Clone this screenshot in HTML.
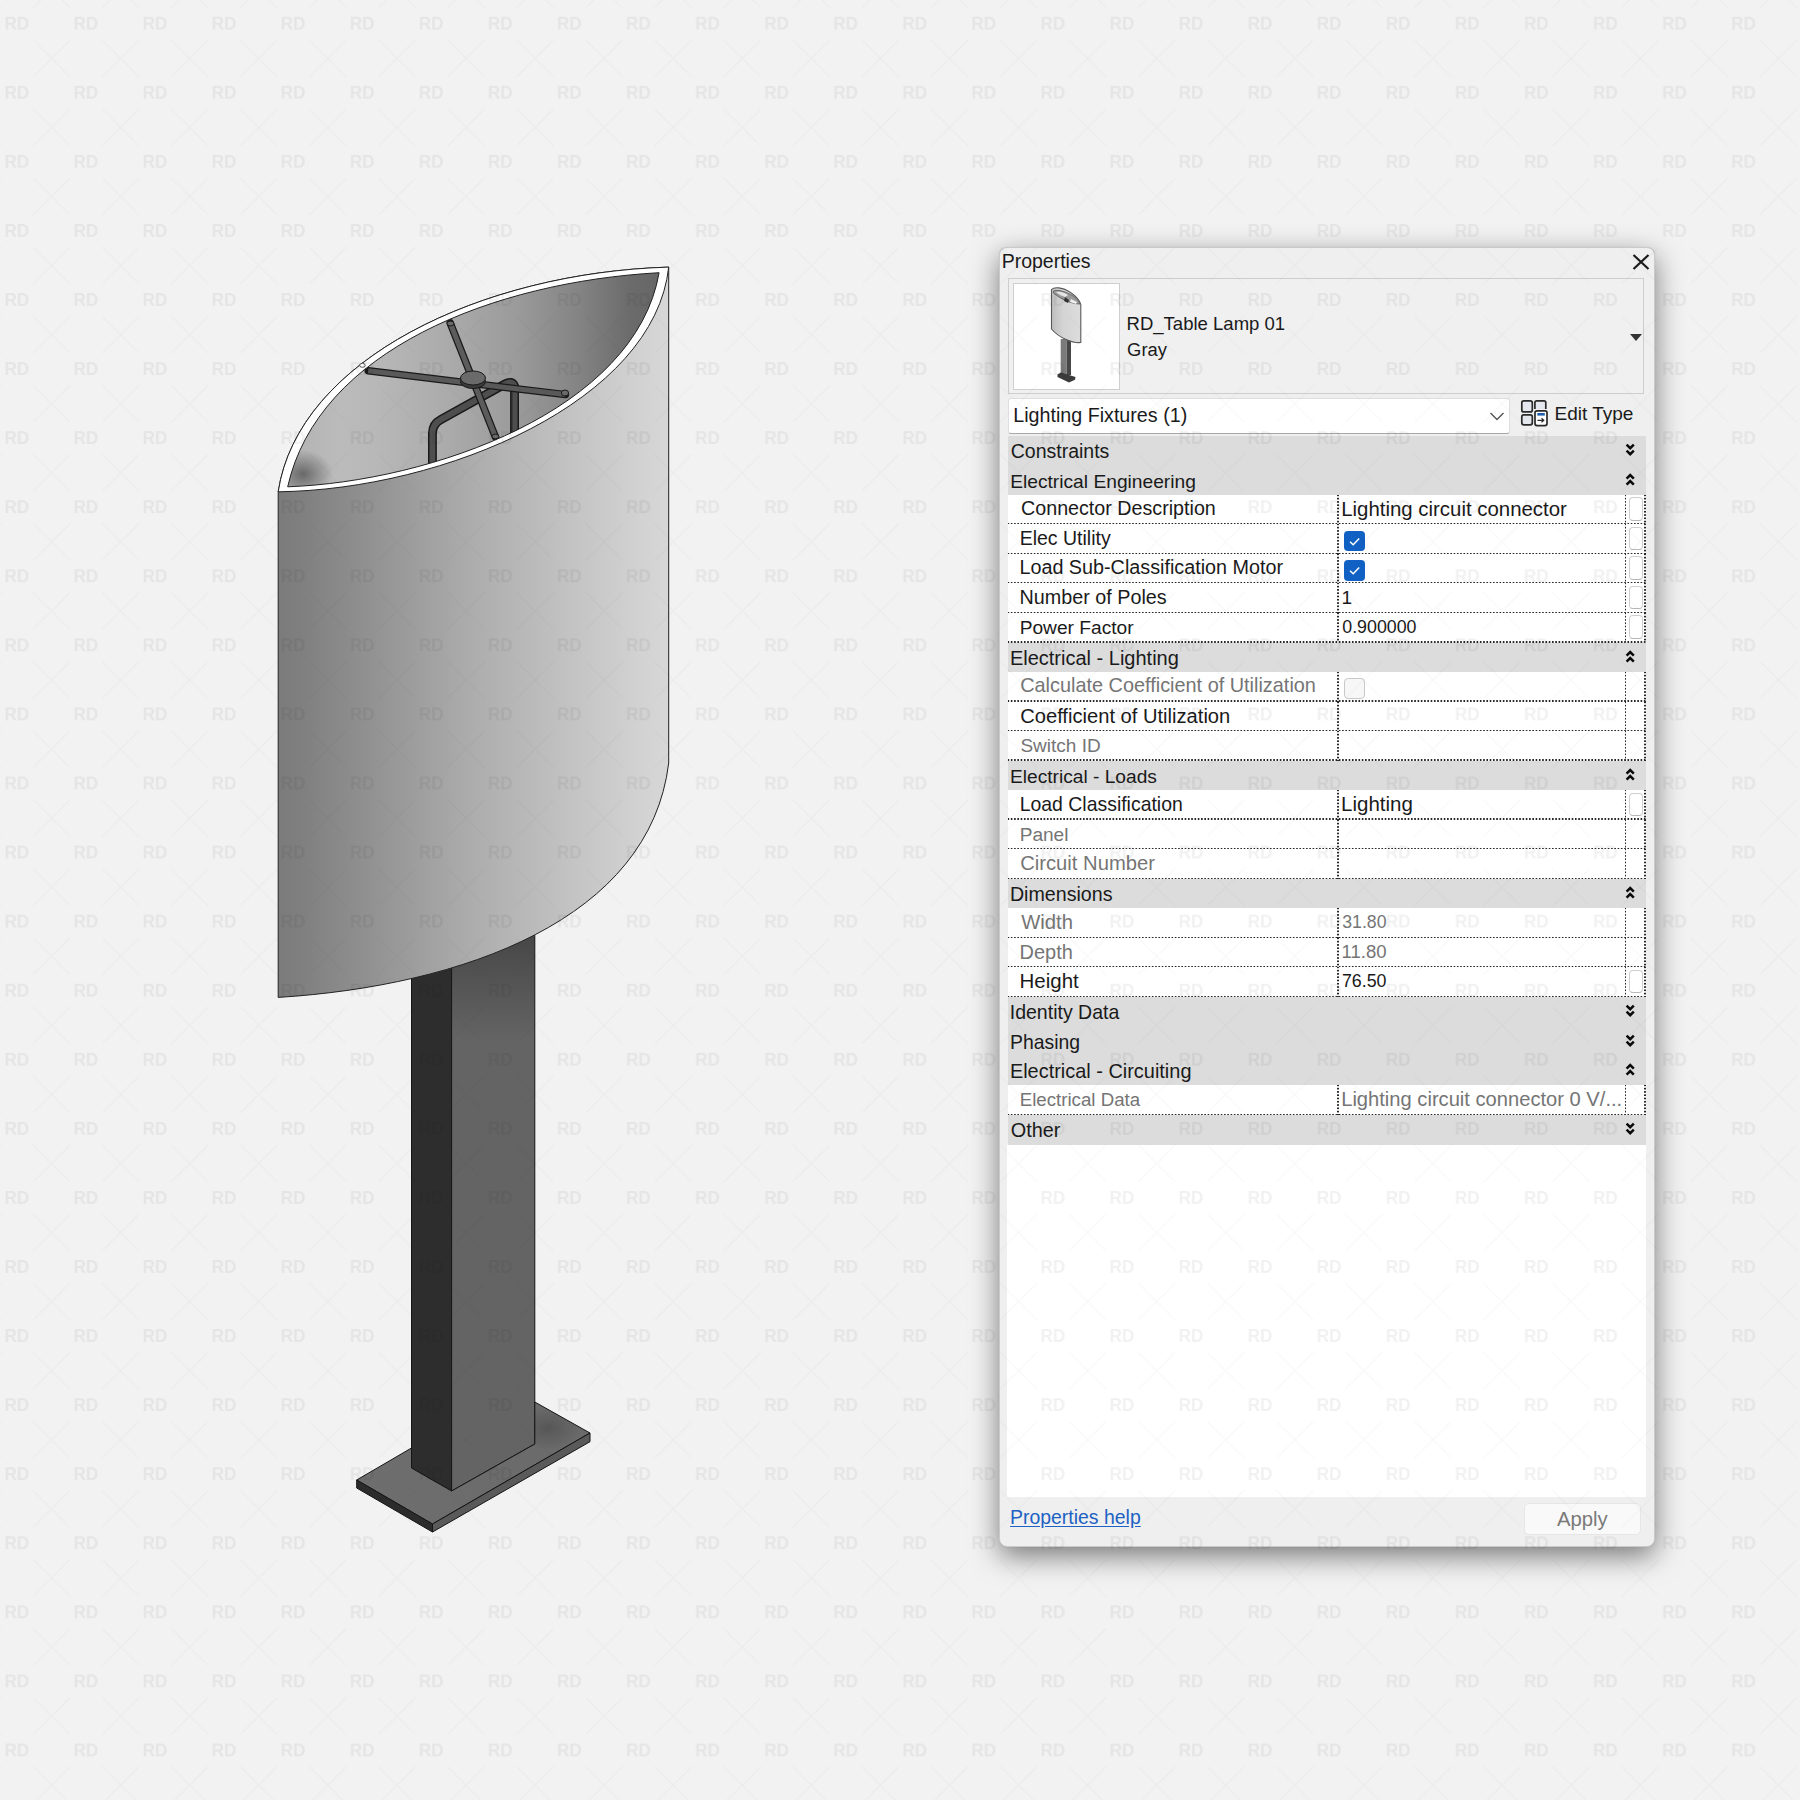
<!DOCTYPE html>
<html><head><meta charset="utf-8"><style>
html,body{margin:0;padding:0;width:1800px;height:1800px;overflow:hidden;background:#f2f2f2;font-family:"Liberation Sans", sans-serif}
.abs{position:absolute}
.t{position:absolute;white-space:nowrap;line-height:1;}
.panel{background:#efefef;border:1px solid #cacaca;box-sizing:border-box;border-radius:8px;box-shadow:0 0 1px rgba(0,0,0,0.15),0 9px 28px rgba(0,0,0,0.5)}
</style></head><body>

<svg class="abs" width="1800" height="1800" viewBox="0 0 1800 1800" style="left:0;top:0">
<defs>
 <linearGradient id="shadeG" x1="278" y1="0" x2="669" y2="0" gradientUnits="userSpaceOnUse">
  <stop offset="0" stop-color="#7b7b7b"/>
  <stop offset="0.056" stop-color="#7f7f7f"/>
  <stop offset="0.25" stop-color="#939393"/>
  <stop offset="0.49" stop-color="#acacac"/>
  <stop offset="0.75" stop-color="#c3c3c3"/>
  <stop offset="0.926" stop-color="#d2d2d2"/>
  <stop offset="1" stop-color="#d7d7d7"/>
 </linearGradient>
 <linearGradient id="shadeV" x1="0" y1="267" x2="0" y2="1000" gradientUnits="userSpaceOnUse">
  <stop offset="0" stop-color="#ffffff" stop-opacity="0.08"/>
  <stop offset="0.5" stop-color="#ffffff" stop-opacity="0"/>
  <stop offset="1" stop-color="#000000" stop-opacity="0.03"/>
 </linearGradient>
 <linearGradient id="inG" x1="288" y1="0" x2="660" y2="0" gradientUnits="userSpaceOnUse">
  <stop offset="0" stop-color="#b2b2b2"/>
  <stop offset="0.14" stop-color="#bbbbbb"/>
  <stop offset="0.25" stop-color="#b7b7b7"/>
  <stop offset="0.44" stop-color="#aaaaaa"/>
  <stop offset="0.62" stop-color="#9a9a9a"/>
  <stop offset="0.78" stop-color="#848484"/>
  <stop offset="0.92" stop-color="#6b6b6b"/>
  <stop offset="1" stop-color="#666666"/>
 </linearGradient>
 <radialGradient id="darkR"><stop offset="0" stop-color="#000" stop-opacity="0.42"/><stop offset="1" stop-color="#000" stop-opacity="0"/></radialGradient>
 <radialGradient id="darkR2"><stop offset="0" stop-color="#000" stop-opacity="0.18"/><stop offset="1" stop-color="#000" stop-opacity="0"/></radialGradient>
 <linearGradient id="postR" x1="0" y1="935" x2="0" y2="1040" gradientUnits="userSpaceOnUse">
  <stop offset="0" stop-color="#474747"/>
  <stop offset="1" stop-color="#646464"/>
 </linearGradient>
 <linearGradient id="baseG" x1="356" y1="1480" x2="590" y2="1433" gradientUnits="userSpaceOnUse">
  <stop offset="0" stop-color="#6e6e6e"/>
  <stop offset="1" stop-color="#6a6a6a"/>
 </linearGradient>
 <clipPath id="inClip"><path d="M287.7,486.8 C317.9,350.4 493.8,281.9 659.1,272.7 C635.3,410.4 430.9,481.5 287.7,486.8 Z"/></clipPath>
</defs>
<!-- post -->
<polygon points="411.5,930 451.6,930 451.6,1491 411.5,1468" fill="#2d2d2d" stroke="#151515" stroke-width="1"/>
<polygon points="451.6,930 534.8,930 534.8,1444 451.6,1491" fill="url(#postR)" stroke="#151515" stroke-width="1"/>
<!-- base -->
<polygon points="356.7,1480 411.5,1448 411.5,1468 451.6,1491 534.8,1444 534.8,1402 590,1433 432.5,1524" fill="url(#baseG)" stroke="#151515" stroke-width="1" stroke-linejoin="round"/>
<clipPath id="baseClip"><polygon points="356.7,1480 411.5,1448 411.5,1468 451.6,1491 534.8,1444 534.8,1402 590,1433 432.5,1524"/></clipPath><ellipse cx="548" cy="1428" rx="34" ry="22" fill="url(#darkR)" opacity="0.45" clip-path="url(#baseClip)"/>
<polygon points="356.7,1480 432.5,1524 432.5,1532 356.7,1488" fill="#2c2c2c" stroke="#151515" stroke-width="1" stroke-linejoin="round"/>
<polygon points="432.5,1524 590,1433 590,1441.7 432.5,1532" fill="#5a5a5a" stroke="#151515" stroke-width="1" stroke-linejoin="round"/>
<!-- shade outer body -->
<path d="M278.2,491.8 C298.2,359.4 481.7,272.7 668.7,267.1 L668.7,763 C649.7,919.7 462,985.9 278.2,997.4 Z" fill="url(#shadeG)" stroke="#222" stroke-width="1"/>
<!-- rim white -->
<path d="M278.2,491.8 C298.2,359.4 481.7,272.7 668.7,267.1 C654.2,401.3 444.4,489.6 278.2,491.8 Z" fill="#ffffff" stroke="#222" stroke-width="1"/>
<!-- interior -->
<path d="M287.7,486.8 C317.9,350.4 493.8,281.9 659.1,272.7 C635.3,410.4 430.9,481.5 287.7,486.8 Z" fill="url(#inG)"/>
<g clip-path="url(#inClip)">
 <ellipse cx="303" cy="474" rx="30" ry="24" fill="url(#darkR)"/>
 
 <!-- bracket -->
 <path d="M432.5,470 L432.5,433 Q432.5,424 441,419.5 L505,384 Q512,380 514.5,386 L514.5,440" fill="none" stroke="#1a1a1a" stroke-width="9" stroke-linejoin="round"/>
 <path d="M432.5,470 L432.5,433 Q432.5,424 441,419.5 L505,384 Q512,380 514.5,386 L514.5,440" fill="none" stroke="#4e4e4e" stroke-width="6" stroke-linejoin="round"/>
 <path d="M436,470 L436,434 M511.5,388 L511.5,440" fill="none" stroke="#2a2a2a" stroke-width="2"/>
 <!-- short arm -->
 <line x1="450.2" y1="323" x2="495.6" y2="437.3" stroke="#1a1a1a" stroke-width="7.5" stroke-linecap="round"/>
 <line x1="450.2" y1="323" x2="495.6" y2="437.3" stroke="#5c5c5c" stroke-width="5"/>
 <!-- long arm -->
 <line x1="368.2" y1="370.8" x2="565.4" y2="394.6" stroke="#1a1a1a" stroke-width="7.5" stroke-linecap="round"/>
 <line x1="368.2" y1="370.8" x2="565.4" y2="394.6" stroke="#595959" stroke-width="5"/>
 <ellipse cx="565" cy="393" rx="3.6" ry="3" fill="#6a6a6a" stroke="#1a1a1a" stroke-width="1"/>
 <ellipse cx="450.5" cy="323.5" rx="3.4" ry="2.4" fill="#6a6a6a" stroke="#1a1a1a" stroke-width="1"/>
 <ellipse cx="495.5" cy="436.5" rx="3.4" ry="2.4" fill="#6a6a6a" stroke="#1a1a1a" stroke-width="1"/>
 <!-- hub -->
 <ellipse cx="473" cy="381.5" rx="12.5" ry="7" fill="#3a3a3a" stroke="#1a1a1a" stroke-width="1"/>
 <ellipse cx="473" cy="378" rx="12.5" ry="7" fill="#6a6a6a" stroke="#1a1a1a" stroke-width="1"/>
</g>
<path d="M287.7,486.8 C317.9,350.4 493.8,281.9 659.1,272.7 C635.3,410.4 430.9,481.5 287.7,486.8 Z" fill="none" stroke="#222" stroke-width="1"/>
<ellipse cx="362.4" cy="365.3" rx="2.8" ry="2" fill="#fff" stroke="#333" stroke-width="0.8"/>
</svg>
<div class="abs panel" style="left:999px;top:246.7px;width:656px;height:1300.8px"></div>
<div class="t" style="left:1001.64px;top:251.88px;font-size:19.52px;color:#1a1a1a;">Properties</div>
<svg class="abs" style="left:1630px;top:252px" width="22" height="20" viewBox="0 0 22 20"><path d="M3.5,3 L18.5,17 M18.5,3 L3.5,17" stroke="#1a1a1a" stroke-width="2.2"/></svg>
<div class="abs" style="left:1008px;top:278px;width:636px;height:116px;border:1px solid #cdcdcd;box-sizing:border-box;background:#f0f0f0"></div>
<div class="abs" style="left:1013px;top:283px;width:107px;height:107px;border:1px solid #cfcfcf;box-sizing:border-box;background:#fff"></div>
<svg class="abs" style="left:1013px;top:283px" width="107" height="107" viewBox="0 0 107 107">
<defs><linearGradient id="tg" x1="38" x2="68" gradientUnits="userSpaceOnUse"><stop offset="0" stop-color="#bdbdbd"/><stop offset="0.4" stop-color="#d4d4d4"/><stop offset="1" stop-color="#dcdcdc"/></linearGradient>
<filter id="tb" x="-10%" y="-10%" width="120%" height="120%"><feGaussianBlur stdDeviation="0.45"/></filter></defs>
<g filter="url(#tb)">
<rect x="47.7" y="56" width="6" height="36" fill="#7a7a7a"/><rect x="53.7" y="56" width="4.3" height="36" fill="#474747"/>
<path d="M44.5,91.5 L48,89.5 L62.5,94 L62,96.8 L56,99.5 L44.5,94 Z" fill="#3a3a3a"/>
<path d="M38.5,6.5 C41,3.5 50,4.5 56,8.5 C61,11.5 66,16 67.8,21.5 L67.8,59.5 C60,60.5 46,55 38.5,46 Z" fill="url(#tg)" stroke="#5a5a5a" stroke-width="1.1"/>
<path d="M40.5,8 C45,6 54,9 61,13.5 C64.5,16 66.5,19 67,21 C59,21 48,16.5 40.5,10 Z" fill="#9a9a9a" stroke="#555" stroke-width="0.8"/>
<path d="M43,9 C47,8 52,10 55,12 L52,14 C48,13 45,11 43,9 Z" fill="#e8e8e8"/>
<path d="M52,14 L56,17 L55,20 L51,18 Z" fill="#333"/>
<path d="M58,16 L64,19 L63,21 L57,19 Z" fill="#eee"/>
</g>
</svg>
<div class="t" style="left:1126.52px;top:315.10px;font-size:18.55px;color:#1a1a1a;">RD_Table Lamp 01</div>
<div class="t" style="left:1127.08px;top:340.91px;font-size:18.42px;color:#1a1a1a;">Gray</div>
<svg class="abs" style="left:1628px;top:332px" width="16" height="11" viewBox="0 0 16 11"><path d="M2,2 L14,2 L8,9 Z" fill="#333"/></svg>
<div class="abs" style="left:1008px;top:397.5px;width:502px;height:36px;border:1px solid #dedede;border-bottom:1px solid #a8a8a8;box-sizing:border-box;background:#fff;border-radius:3px"></div>
<div class="t" style="left:1013.22px;top:405.92px;font-size:19.7px;color:#1a1a1a;">Lighting Fixtures (1)</div>
<svg class="abs" style="left:1488px;top:409px" width="18" height="14" viewBox="0 0 18 14"><path d="M2.5,4 L9,10.5 L15.5,4" fill="none" stroke="#555" stroke-width="1.4"/></svg>
<svg class="abs" style="left:1518px;top:397px" width="32" height="32" viewBox="0 0 32 32">
<rect x="3.8" y="3.9" width="10.5" height="11" rx="2" fill="#e4e8ee" stroke="#2a2a2a" stroke-width="1.7"/>
<rect x="3.8" y="17.8" width="10.5" height="10" rx="2" fill="#e4e8ee" stroke="#2a2a2a" stroke-width="1.7"/>
<path d="M16.9,12 L16.9,5.8 Q16.9,3.9 18.8,3.9 L26,3.9 Q27.8,3.9 27.8,5.8 L27.8,12" fill="#e4e8ee" stroke="#2a2a2a" stroke-width="1.7"/>
<rect x="17" y="13.8" width="12" height="14.8" rx="2" fill="#fff" stroke="#2a2a2a" stroke-width="1.7"/>
<rect x="19.3" y="16" width="7.5" height="2.6" fill="#1f5fb0"/>
<path d="M19.5,23.3 L25.5,23.3 M23.5,21.3 L25.8,23.3 L23.5,25.3" fill="none" stroke="#2a2a2a" stroke-width="1.2"/>
</svg>
<div class="t" style="left:1554.48px;top:403.92px;font-size:19.0px;color:#1a1a1a;">Edit Type</div>
<div class="abs" style="left:1008px;top:435.80px;width:637.70px;height:29.53px;background:#dcdcdc"></div>
<div class="t" style="left:1010.72px;top:442.08px;font-size:19.51px;color:#1a1a1a;">Constraints</div>
<svg class="abs" style="left:1625px;top:443.20px" width="11" height="13" viewBox="0 0 11 13"><path d="M1.6,1.6 L5.2,5.2 L8.8,1.6 M1.6,7.6 L5.2,11.2 L8.8,7.6" fill="none" stroke="#0a0a0a" stroke-width="2.5"/></svg>
<div class="abs" style="left:1008px;top:465.33px;width:637.70px;height:29.53px;background:#dcdcdc"></div>
<div class="t" style="left:1010.16px;top:471.86px;font-size:19.22px;color:#1a1a1a;">Electrical Engineering</div>
<svg class="abs" style="left:1625px;top:472.73px" width="11" height="13" viewBox="0 0 11 13"><path d="M1.6,5.6 L5.2,2 L8.8,5.6 M1.6,11.6 L5.2,8 L8.8,11.6" fill="none" stroke="#0a0a0a" stroke-width="2.5"/></svg>
<div class="abs" style="left:1008px;top:494.86px;width:638.00px;height:29.53px;background:#fff"></div>
<div class="t" style="left:1021.02px;top:499.18px;font-size:19.7px;color:#1a1a1a;">Connector Description</div>
<div class="t" style="left:1341.17px;top:498.58px;font-size:20.41px;color:#1a1a1a;">Lighting circuit connector</div>
<div class="abs" style="left:1008px;top:523.19px;width:638.00px;height:1.7px;background:repeating-linear-gradient(90deg,rgba(40,40,40,1) 0px,rgba(40,40,40,1) 0.7px,rgba(40,40,40,0) 1.64px,rgba(40,40,40,0) 2.34px,rgba(40,40,40,1) 3.28px)"></div>
<div class="abs" style="left:1337.30px;top:494.86px;width:1.7px;height:29.53px;background:repeating-linear-gradient(180deg,rgba(40,40,40,1) 0px,rgba(40,40,40,1) 0.7px,rgba(40,40,40,0) 1.64px,rgba(40,40,40,0) 2.34px,rgba(40,40,40,1) 3.28px)"></div>
<div class="abs" style="left:1624.80px;top:494.86px;width:1.7px;height:29.53px;background:repeating-linear-gradient(180deg,rgba(40,40,40,1) 0px,rgba(40,40,40,1) 0.7px,rgba(40,40,40,0) 1.64px,rgba(40,40,40,0) 2.34px,rgba(40,40,40,1) 3.28px)"></div>
<div class="abs" style="left:1644.30px;top:494.86px;width:1.7px;height:29.53px;background:repeating-linear-gradient(180deg,rgba(40,40,40,1) 0px,rgba(40,40,40,1) 0.7px,rgba(40,40,40,0) 1.64px,rgba(40,40,40,0) 2.34px,rgba(40,40,40,1) 3.28px)"></div>
<div class="abs" style="left:1628.5px;top:497.36px;width:14px;height:23.5px;background:#fff;border:1px solid #cfcfcf;border-bottom-color:#b8b8b8;box-sizing:border-box;border-radius:4px"></div>
<div class="abs" style="left:1008px;top:524.39px;width:638.00px;height:29.53px;background:#fff"></div>
<div class="t" style="left:1019.64px;top:528.87px;font-size:19.51px;color:#1a1a1a;">Elec Utility</div>
<div class="abs" style="left:1343.8px;top:530.69px;width:21px;height:20.5px;background:#1160c4;border-radius:4px"></div>
<svg class="abs" style="left:1343.8px;top:530.69px" width="21" height="21" viewBox="0 0 21 21"><path d="M6,10.8 L9.2,13.8 L15.2,7.6" fill="none" stroke="#fff" stroke-width="1.5"/></svg>
<div class="abs" style="left:1008px;top:552.72px;width:638.00px;height:1.7px;background:repeating-linear-gradient(90deg,rgba(40,40,40,1) 0px,rgba(40,40,40,1) 0.7px,rgba(40,40,40,0) 1.64px,rgba(40,40,40,0) 2.34px,rgba(40,40,40,1) 3.28px)"></div>
<div class="abs" style="left:1337.30px;top:524.39px;width:1.7px;height:29.53px;background:repeating-linear-gradient(180deg,rgba(40,40,40,1) 0px,rgba(40,40,40,1) 0.7px,rgba(40,40,40,0) 1.64px,rgba(40,40,40,0) 2.34px,rgba(40,40,40,1) 3.28px)"></div>
<div class="abs" style="left:1624.80px;top:524.39px;width:1.7px;height:29.53px;background:repeating-linear-gradient(180deg,rgba(40,40,40,1) 0px,rgba(40,40,40,1) 0.7px,rgba(40,40,40,0) 1.64px,rgba(40,40,40,0) 2.34px,rgba(40,40,40,1) 3.28px)"></div>
<div class="abs" style="left:1644.30px;top:524.39px;width:1.7px;height:29.53px;background:repeating-linear-gradient(180deg,rgba(40,40,40,1) 0px,rgba(40,40,40,1) 0.7px,rgba(40,40,40,0) 1.64px,rgba(40,40,40,0) 2.34px,rgba(40,40,40,1) 3.28px)"></div>
<div class="abs" style="left:1628.5px;top:526.89px;width:14px;height:23.5px;background:#fff;border:1px solid #cfcfcf;border-bottom-color:#b8b8b8;box-sizing:border-box;border-radius:4px"></div>
<div class="abs" style="left:1008px;top:553.92px;width:638.00px;height:29.53px;background:#fff"></div>
<div class="t" style="left:1019.42px;top:558.18px;font-size:19.78px;color:#1a1a1a;">Load Sub-Classification Motor</div>
<div class="abs" style="left:1343.8px;top:560.22px;width:21px;height:20.5px;background:#1160c4;border-radius:4px"></div>
<svg class="abs" style="left:1343.8px;top:560.22px" width="21" height="21" viewBox="0 0 21 21"><path d="M6,10.8 L9.2,13.8 L15.2,7.6" fill="none" stroke="#fff" stroke-width="1.5"/></svg>
<div class="abs" style="left:1008px;top:582.25px;width:638.00px;height:1.7px;background:repeating-linear-gradient(90deg,rgba(40,40,40,1) 0px,rgba(40,40,40,1) 0.7px,rgba(40,40,40,0) 1.64px,rgba(40,40,40,0) 2.34px,rgba(40,40,40,1) 3.28px)"></div>
<div class="abs" style="left:1337.30px;top:553.92px;width:1.7px;height:29.53px;background:repeating-linear-gradient(180deg,rgba(40,40,40,1) 0px,rgba(40,40,40,1) 0.7px,rgba(40,40,40,0) 1.64px,rgba(40,40,40,0) 2.34px,rgba(40,40,40,1) 3.28px)"></div>
<div class="abs" style="left:1624.80px;top:553.92px;width:1.7px;height:29.53px;background:repeating-linear-gradient(180deg,rgba(40,40,40,1) 0px,rgba(40,40,40,1) 0.7px,rgba(40,40,40,0) 1.64px,rgba(40,40,40,0) 2.34px,rgba(40,40,40,1) 3.28px)"></div>
<div class="abs" style="left:1644.30px;top:553.92px;width:1.7px;height:29.53px;background:repeating-linear-gradient(180deg,rgba(40,40,40,1) 0px,rgba(40,40,40,1) 0.7px,rgba(40,40,40,0) 1.64px,rgba(40,40,40,0) 2.34px,rgba(40,40,40,1) 3.28px)"></div>
<div class="abs" style="left:1628.5px;top:556.42px;width:14px;height:23.5px;background:#fff;border:1px solid #cfcfcf;border-bottom-color:#b8b8b8;box-sizing:border-box;border-radius:4px"></div>
<div class="abs" style="left:1008px;top:583.45px;width:638.00px;height:29.53px;background:#fff"></div>
<div class="t" style="left:1019.62px;top:587.73px;font-size:19.75px;color:#1a1a1a;">Number of Poles</div>
<div class="t" style="left:1341.62px;top:588.37px;font-size:19.0px;color:#1a1a1a;">1</div>
<div class="abs" style="left:1008px;top:611.78px;width:638.00px;height:1.7px;background:repeating-linear-gradient(90deg,rgba(40,40,40,1) 0px,rgba(40,40,40,1) 0.7px,rgba(40,40,40,0) 1.64px,rgba(40,40,40,0) 2.34px,rgba(40,40,40,1) 3.28px)"></div>
<div class="abs" style="left:1337.30px;top:583.45px;width:1.7px;height:29.53px;background:repeating-linear-gradient(180deg,rgba(40,40,40,1) 0px,rgba(40,40,40,1) 0.7px,rgba(40,40,40,0) 1.64px,rgba(40,40,40,0) 2.34px,rgba(40,40,40,1) 3.28px)"></div>
<div class="abs" style="left:1624.80px;top:583.45px;width:1.7px;height:29.53px;background:repeating-linear-gradient(180deg,rgba(40,40,40,1) 0px,rgba(40,40,40,1) 0.7px,rgba(40,40,40,0) 1.64px,rgba(40,40,40,0) 2.34px,rgba(40,40,40,1) 3.28px)"></div>
<div class="abs" style="left:1644.30px;top:583.45px;width:1.7px;height:29.53px;background:repeating-linear-gradient(180deg,rgba(40,40,40,1) 0px,rgba(40,40,40,1) 0.7px,rgba(40,40,40,0) 1.64px,rgba(40,40,40,0) 2.34px,rgba(40,40,40,1) 3.28px)"></div>
<div class="abs" style="left:1628.5px;top:585.95px;width:14px;height:23.5px;background:#fff;border:1px solid #cfcfcf;border-bottom-color:#b8b8b8;box-sizing:border-box;border-radius:4px"></div>
<div class="abs" style="left:1008px;top:612.98px;width:638.00px;height:29.53px;background:#fff"></div>
<div class="t" style="left:1019.67px;top:617.75px;font-size:19.17px;color:#1a1a1a;">Power Factor</div>
<div class="t" style="left:1342.27px;top:618.90px;font-size:17.81px;color:#1a1a1a;">0.900000</div>
<div class="abs" style="left:1008px;top:641.31px;width:638.00px;height:1.7px;background:repeating-linear-gradient(90deg,rgba(40,40,40,1) 0px,rgba(40,40,40,1) 0.7px,rgba(40,40,40,0) 1.64px,rgba(40,40,40,0) 2.34px,rgba(40,40,40,1) 3.28px)"></div>
<div class="abs" style="left:1337.30px;top:612.98px;width:1.7px;height:29.53px;background:repeating-linear-gradient(180deg,rgba(40,40,40,1) 0px,rgba(40,40,40,1) 0.7px,rgba(40,40,40,0) 1.64px,rgba(40,40,40,0) 2.34px,rgba(40,40,40,1) 3.28px)"></div>
<div class="abs" style="left:1624.80px;top:612.98px;width:1.7px;height:29.53px;background:repeating-linear-gradient(180deg,rgba(40,40,40,1) 0px,rgba(40,40,40,1) 0.7px,rgba(40,40,40,0) 1.64px,rgba(40,40,40,0) 2.34px,rgba(40,40,40,1) 3.28px)"></div>
<div class="abs" style="left:1644.30px;top:612.98px;width:1.7px;height:29.53px;background:repeating-linear-gradient(180deg,rgba(40,40,40,1) 0px,rgba(40,40,40,1) 0.7px,rgba(40,40,40,0) 1.64px,rgba(40,40,40,0) 2.34px,rgba(40,40,40,1) 3.28px)"></div>
<div class="abs" style="left:1628.5px;top:615.48px;width:14px;height:23.5px;background:#fff;border:1px solid #cfcfcf;border-bottom-color:#b8b8b8;box-sizing:border-box;border-radius:4px"></div>
<div class="abs" style="left:1008px;top:642.51px;width:637.70px;height:29.53px;background:#dcdcdc"></div>
<div class="t" style="left:1009.90px;top:648.37px;font-size:20.01px;color:#1a1a1a;">Electrical - Lighting</div>
<svg class="abs" style="left:1625px;top:649.91px" width="11" height="13" viewBox="0 0 11 13"><path d="M1.6,5.6 L5.2,2 L8.8,5.6 M1.6,11.6 L5.2,8 L8.8,11.6" fill="none" stroke="#0a0a0a" stroke-width="2.5"/></svg>
<div class="abs" style="left:1008px;top:672.04px;width:638.00px;height:29.53px;background:#fff"></div>
<div class="t" style="left:1020.21px;top:676.20px;font-size:19.89px;color:#757575;">Calculate Coefficient of Utilization</div>
<div class="abs" style="left:1343.8px;top:678.34px;width:21px;height:20.5px;background:#f7f7f7;border:1px solid #c9c9c9;box-sizing:border-box;border-radius:4px"></div>
<div class="abs" style="left:1008px;top:700.37px;width:638.00px;height:1.7px;background:repeating-linear-gradient(90deg,rgba(40,40,40,1) 0px,rgba(40,40,40,1) 0.7px,rgba(40,40,40,0) 1.64px,rgba(40,40,40,0) 2.34px,rgba(40,40,40,1) 3.28px)"></div>
<div class="abs" style="left:1337.30px;top:672.04px;width:1.7px;height:29.53px;background:repeating-linear-gradient(180deg,rgba(40,40,40,1) 0px,rgba(40,40,40,1) 0.7px,rgba(40,40,40,0) 1.64px,rgba(40,40,40,0) 2.34px,rgba(40,40,40,1) 3.28px)"></div>
<div class="abs" style="left:1624.80px;top:672.04px;width:1.7px;height:29.53px;background:repeating-linear-gradient(180deg,rgba(40,40,40,1) 0px,rgba(40,40,40,1) 0.7px,rgba(40,40,40,0) 1.64px,rgba(40,40,40,0) 2.34px,rgba(40,40,40,1) 3.28px)"></div>
<div class="abs" style="left:1644.30px;top:672.04px;width:1.7px;height:29.53px;background:repeating-linear-gradient(180deg,rgba(40,40,40,1) 0px,rgba(40,40,40,1) 0.7px,rgba(40,40,40,0) 1.64px,rgba(40,40,40,0) 2.34px,rgba(40,40,40,1) 3.28px)"></div>
<div class="abs" style="left:1008px;top:701.57px;width:638.00px;height:29.53px;background:#fff"></div>
<div class="t" style="left:1020.19px;top:705.51px;font-size:20.15px;color:#1a1a1a;">Coefficient of Utilization</div>
<div class="abs" style="left:1008px;top:729.90px;width:638.00px;height:1.7px;background:repeating-linear-gradient(90deg,rgba(40,40,40,1) 0px,rgba(40,40,40,1) 0.7px,rgba(40,40,40,0) 1.64px,rgba(40,40,40,0) 2.34px,rgba(40,40,40,1) 3.28px)"></div>
<div class="abs" style="left:1337.30px;top:701.57px;width:1.7px;height:29.53px;background:repeating-linear-gradient(180deg,rgba(40,40,40,1) 0px,rgba(40,40,40,1) 0.7px,rgba(40,40,40,0) 1.64px,rgba(40,40,40,0) 2.34px,rgba(40,40,40,1) 3.28px)"></div>
<div class="abs" style="left:1624.80px;top:701.57px;width:1.7px;height:29.53px;background:repeating-linear-gradient(180deg,rgba(40,40,40,1) 0px,rgba(40,40,40,1) 0.7px,rgba(40,40,40,0) 1.64px,rgba(40,40,40,0) 2.34px,rgba(40,40,40,1) 3.28px)"></div>
<div class="abs" style="left:1644.30px;top:701.57px;width:1.7px;height:29.53px;background:repeating-linear-gradient(180deg,rgba(40,40,40,1) 0px,rgba(40,40,40,1) 0.7px,rgba(40,40,40,0) 1.64px,rgba(40,40,40,0) 2.34px,rgba(40,40,40,1) 3.28px)"></div>
<div class="abs" style="left:1008px;top:731.10px;width:638.00px;height:29.53px;background:#fff"></div>
<div class="t" style="left:1020.44px;top:735.99px;font-size:19.03px;color:#757575;">Switch ID</div>
<div class="abs" style="left:1008px;top:759.43px;width:638.00px;height:1.7px;background:repeating-linear-gradient(90deg,rgba(40,40,40,1) 0px,rgba(40,40,40,1) 0.7px,rgba(40,40,40,0) 1.64px,rgba(40,40,40,0) 2.34px,rgba(40,40,40,1) 3.28px)"></div>
<div class="abs" style="left:1337.30px;top:731.10px;width:1.7px;height:29.53px;background:repeating-linear-gradient(180deg,rgba(40,40,40,1) 0px,rgba(40,40,40,1) 0.7px,rgba(40,40,40,0) 1.64px,rgba(40,40,40,0) 2.34px,rgba(40,40,40,1) 3.28px)"></div>
<div class="abs" style="left:1624.80px;top:731.10px;width:1.7px;height:29.53px;background:repeating-linear-gradient(180deg,rgba(40,40,40,1) 0px,rgba(40,40,40,1) 0.7px,rgba(40,40,40,0) 1.64px,rgba(40,40,40,0) 2.34px,rgba(40,40,40,1) 3.28px)"></div>
<div class="abs" style="left:1644.30px;top:731.10px;width:1.7px;height:29.53px;background:repeating-linear-gradient(180deg,rgba(40,40,40,1) 0px,rgba(40,40,40,1) 0.7px,rgba(40,40,40,0) 1.64px,rgba(40,40,40,0) 2.34px,rgba(40,40,40,1) 3.28px)"></div>
<div class="abs" style="left:1008px;top:760.63px;width:637.70px;height:29.53px;background:#dcdcdc"></div>
<div class="t" style="left:1009.97px;top:767.20px;font-size:19.17px;color:#1a1a1a;">Electrical - Loads</div>
<svg class="abs" style="left:1625px;top:768.03px" width="11" height="13" viewBox="0 0 11 13"><path d="M1.6,5.6 L5.2,2 L8.8,5.6 M1.6,11.6 L5.2,8 L8.8,11.6" fill="none" stroke="#0a0a0a" stroke-width="2.5"/></svg>
<div class="abs" style="left:1008px;top:790.16px;width:638.00px;height:29.53px;background:#fff"></div>
<div class="t" style="left:1019.65px;top:794.70px;font-size:19.44px;color:#1a1a1a;">Load Classification</div>
<div class="t" style="left:1341.12px;top:793.81px;font-size:20.5px;color:#1a1a1a;">Lighting</div>
<div class="abs" style="left:1008px;top:818.49px;width:638.00px;height:1.7px;background:repeating-linear-gradient(90deg,rgba(40,40,40,1) 0px,rgba(40,40,40,1) 0.7px,rgba(40,40,40,0) 1.64px,rgba(40,40,40,0) 2.34px,rgba(40,40,40,1) 3.28px)"></div>
<div class="abs" style="left:1337.30px;top:790.16px;width:1.7px;height:29.53px;background:repeating-linear-gradient(180deg,rgba(40,40,40,1) 0px,rgba(40,40,40,1) 0.7px,rgba(40,40,40,0) 1.64px,rgba(40,40,40,0) 2.34px,rgba(40,40,40,1) 3.28px)"></div>
<div class="abs" style="left:1624.80px;top:790.16px;width:1.7px;height:29.53px;background:repeating-linear-gradient(180deg,rgba(40,40,40,1) 0px,rgba(40,40,40,1) 0.7px,rgba(40,40,40,0) 1.64px,rgba(40,40,40,0) 2.34px,rgba(40,40,40,1) 3.28px)"></div>
<div class="abs" style="left:1644.30px;top:790.16px;width:1.7px;height:29.53px;background:repeating-linear-gradient(180deg,rgba(40,40,40,1) 0px,rgba(40,40,40,1) 0.7px,rgba(40,40,40,0) 1.64px,rgba(40,40,40,0) 2.34px,rgba(40,40,40,1) 3.28px)"></div>
<div class="abs" style="left:1628.5px;top:792.66px;width:14px;height:23.5px;background:#fff;border:1px solid #cfcfcf;border-bottom-color:#b8b8b8;box-sizing:border-box;border-radius:4px"></div>
<div class="abs" style="left:1008px;top:819.69px;width:638.00px;height:29.53px;background:#fff"></div>
<div class="t" style="left:1019.67px;top:824.53px;font-size:19.09px;color:#757575;">Panel</div>
<div class="abs" style="left:1008px;top:848.02px;width:638.00px;height:1.7px;background:repeating-linear-gradient(90deg,rgba(40,40,40,1) 0px,rgba(40,40,40,1) 0.7px,rgba(40,40,40,0) 1.64px,rgba(40,40,40,0) 2.34px,rgba(40,40,40,1) 3.28px)"></div>
<div class="abs" style="left:1337.30px;top:819.69px;width:1.7px;height:29.53px;background:repeating-linear-gradient(180deg,rgba(40,40,40,1) 0px,rgba(40,40,40,1) 0.7px,rgba(40,40,40,0) 1.64px,rgba(40,40,40,0) 2.34px,rgba(40,40,40,1) 3.28px)"></div>
<div class="abs" style="left:1624.80px;top:819.69px;width:1.7px;height:29.53px;background:repeating-linear-gradient(180deg,rgba(40,40,40,1) 0px,rgba(40,40,40,1) 0.7px,rgba(40,40,40,0) 1.64px,rgba(40,40,40,0) 2.34px,rgba(40,40,40,1) 3.28px)"></div>
<div class="abs" style="left:1644.30px;top:819.69px;width:1.7px;height:29.53px;background:repeating-linear-gradient(180deg,rgba(40,40,40,1) 0px,rgba(40,40,40,1) 0.7px,rgba(40,40,40,0) 1.64px,rgba(40,40,40,0) 2.34px,rgba(40,40,40,1) 3.28px)"></div>
<div class="abs" style="left:1008px;top:849.22px;width:638.00px;height:29.53px;background:#fff"></div>
<div class="t" style="left:1020.19px;top:853.10px;font-size:20.23px;color:#757575;">Circuit Number</div>
<div class="abs" style="left:1008px;top:877.55px;width:638.00px;height:1.7px;background:repeating-linear-gradient(90deg,rgba(40,40,40,1) 0px,rgba(40,40,40,1) 0.7px,rgba(40,40,40,0) 1.64px,rgba(40,40,40,0) 2.34px,rgba(40,40,40,1) 3.28px)"></div>
<div class="abs" style="left:1337.30px;top:849.22px;width:1.7px;height:29.53px;background:repeating-linear-gradient(180deg,rgba(40,40,40,1) 0px,rgba(40,40,40,1) 0.7px,rgba(40,40,40,0) 1.64px,rgba(40,40,40,0) 2.34px,rgba(40,40,40,1) 3.28px)"></div>
<div class="abs" style="left:1624.80px;top:849.22px;width:1.7px;height:29.53px;background:repeating-linear-gradient(180deg,rgba(40,40,40,1) 0px,rgba(40,40,40,1) 0.7px,rgba(40,40,40,0) 1.64px,rgba(40,40,40,0) 2.34px,rgba(40,40,40,1) 3.28px)"></div>
<div class="abs" style="left:1644.30px;top:849.22px;width:1.7px;height:29.53px;background:repeating-linear-gradient(180deg,rgba(40,40,40,1) 0px,rgba(40,40,40,1) 0.7px,rgba(40,40,40,0) 1.64px,rgba(40,40,40,0) 2.34px,rgba(40,40,40,1) 3.28px)"></div>
<div class="abs" style="left:1008px;top:878.75px;width:637.70px;height:29.53px;background:#dcdcdc"></div>
<div class="t" style="left:1009.93px;top:884.92px;font-size:19.65px;color:#1a1a1a;">Dimensions</div>
<svg class="abs" style="left:1625px;top:886.15px" width="11" height="13" viewBox="0 0 11 13"><path d="M1.6,5.6 L5.2,2 L8.8,5.6 M1.6,11.6 L5.2,8 L8.8,11.6" fill="none" stroke="#0a0a0a" stroke-width="2.5"/></svg>
<div class="abs" style="left:1008px;top:908.28px;width:638.00px;height:29.53px;background:#fff"></div>
<div class="t" style="left:1021.20px;top:912.15px;font-size:20.24px;color:#757575;">Width</div>
<div class="t" style="left:1342.27px;top:914.31px;font-size:17.69px;color:#757575;">31.80</div>
<div class="abs" style="left:1008px;top:936.61px;width:638.00px;height:1.7px;background:repeating-linear-gradient(90deg,rgba(40,40,40,1) 0px,rgba(40,40,40,1) 0.7px,rgba(40,40,40,0) 1.64px,rgba(40,40,40,0) 2.34px,rgba(40,40,40,1) 3.28px)"></div>
<div class="abs" style="left:1337.30px;top:908.28px;width:1.7px;height:29.53px;background:repeating-linear-gradient(180deg,rgba(40,40,40,1) 0px,rgba(40,40,40,1) 0.7px,rgba(40,40,40,0) 1.64px,rgba(40,40,40,0) 2.34px,rgba(40,40,40,1) 3.28px)"></div>
<div class="abs" style="left:1624.80px;top:908.28px;width:1.7px;height:29.53px;background:repeating-linear-gradient(180deg,rgba(40,40,40,1) 0px,rgba(40,40,40,1) 0.7px,rgba(40,40,40,0) 1.64px,rgba(40,40,40,0) 2.34px,rgba(40,40,40,1) 3.28px)"></div>
<div class="abs" style="left:1644.30px;top:908.28px;width:1.7px;height:29.53px;background:repeating-linear-gradient(180deg,rgba(40,40,40,1) 0px,rgba(40,40,40,1) 0.7px,rgba(40,40,40,0) 1.64px,rgba(40,40,40,0) 2.34px,rgba(40,40,40,1) 3.28px)"></div>
<div class="abs" style="left:1008px;top:937.81px;width:638.00px;height:29.53px;background:#fff"></div>
<div class="t" style="left:1019.60px;top:941.90px;font-size:19.98px;color:#757575;">Depth</div>
<div class="t" style="left:1341.50px;top:943.10px;font-size:18.56px;color:#757575;">11.80</div>
<div class="abs" style="left:1008px;top:966.14px;width:638.00px;height:1.7px;background:repeating-linear-gradient(90deg,rgba(40,40,40,1) 0px,rgba(40,40,40,1) 0.7px,rgba(40,40,40,0) 1.64px,rgba(40,40,40,0) 2.34px,rgba(40,40,40,1) 3.28px)"></div>
<div class="abs" style="left:1337.30px;top:937.81px;width:1.7px;height:29.53px;background:repeating-linear-gradient(180deg,rgba(40,40,40,1) 0px,rgba(40,40,40,1) 0.7px,rgba(40,40,40,0) 1.64px,rgba(40,40,40,0) 2.34px,rgba(40,40,40,1) 3.28px)"></div>
<div class="abs" style="left:1624.80px;top:937.81px;width:1.7px;height:29.53px;background:repeating-linear-gradient(180deg,rgba(40,40,40,1) 0px,rgba(40,40,40,1) 0.7px,rgba(40,40,40,0) 1.64px,rgba(40,40,40,0) 2.34px,rgba(40,40,40,1) 3.28px)"></div>
<div class="abs" style="left:1644.30px;top:937.81px;width:1.7px;height:29.53px;background:repeating-linear-gradient(180deg,rgba(40,40,40,1) 0px,rgba(40,40,40,1) 0.7px,rgba(40,40,40,0) 1.64px,rgba(40,40,40,0) 2.34px,rgba(40,40,40,1) 3.28px)"></div>
<div class="abs" style="left:1008px;top:967.34px;width:638.00px;height:29.53px;background:#fff"></div>
<div class="t" style="left:1019.56px;top:970.99px;font-size:20.5px;color:#1a1a1a;">Height</div>
<div class="t" style="left:1341.91px;top:973.24px;font-size:17.84px;color:#1a1a1a;">76.50</div>
<div class="abs" style="left:1008px;top:995.67px;width:638.00px;height:1.7px;background:repeating-linear-gradient(90deg,rgba(40,40,40,1) 0px,rgba(40,40,40,1) 0.7px,rgba(40,40,40,0) 1.64px,rgba(40,40,40,0) 2.34px,rgba(40,40,40,1) 3.28px)"></div>
<div class="abs" style="left:1337.30px;top:967.34px;width:1.7px;height:29.53px;background:repeating-linear-gradient(180deg,rgba(40,40,40,1) 0px,rgba(40,40,40,1) 0.7px,rgba(40,40,40,0) 1.64px,rgba(40,40,40,0) 2.34px,rgba(40,40,40,1) 3.28px)"></div>
<div class="abs" style="left:1624.80px;top:967.34px;width:1.7px;height:29.53px;background:repeating-linear-gradient(180deg,rgba(40,40,40,1) 0px,rgba(40,40,40,1) 0.7px,rgba(40,40,40,0) 1.64px,rgba(40,40,40,0) 2.34px,rgba(40,40,40,1) 3.28px)"></div>
<div class="abs" style="left:1644.30px;top:967.34px;width:1.7px;height:29.53px;background:repeating-linear-gradient(180deg,rgba(40,40,40,1) 0px,rgba(40,40,40,1) 0.7px,rgba(40,40,40,0) 1.64px,rgba(40,40,40,0) 2.34px,rgba(40,40,40,1) 3.28px)"></div>
<div class="abs" style="left:1628.5px;top:969.84px;width:14px;height:23.5px;background:#fff;border:1px solid #cfcfcf;border-bottom-color:#b8b8b8;box-sizing:border-box;border-radius:4px"></div>
<div class="abs" style="left:1008px;top:996.87px;width:637.70px;height:29.53px;background:#dcdcdc"></div>
<div class="t" style="left:1009.74px;top:1003.15px;font-size:19.52px;color:#1a1a1a;">Identity Data</div>
<svg class="abs" style="left:1625px;top:1004.27px" width="11" height="13" viewBox="0 0 11 13"><path d="M1.6,1.6 L5.2,5.2 L8.8,1.6 M1.6,7.6 L5.2,11.2 L8.8,7.6" fill="none" stroke="#0a0a0a" stroke-width="2.5"/></svg>
<div class="abs" style="left:1008px;top:1026.40px;width:637.70px;height:29.53px;background:#dcdcdc"></div>
<div class="t" style="left:1009.95px;top:1032.77px;font-size:19.41px;color:#1a1a1a;">Phasing</div>
<svg class="abs" style="left:1625px;top:1033.80px" width="11" height="13" viewBox="0 0 11 13"><path d="M1.6,1.6 L5.2,5.2 L8.8,1.6 M1.6,7.6 L5.2,11.2 L8.8,7.6" fill="none" stroke="#0a0a0a" stroke-width="2.5"/></svg>
<div class="abs" style="left:1008px;top:1055.93px;width:637.70px;height:29.53px;background:#dcdcdc"></div>
<div class="t" style="left:1009.91px;top:1061.86px;font-size:19.93px;color:#1a1a1a;">Electrical - Circuiting</div>
<svg class="abs" style="left:1625px;top:1063.33px" width="11" height="13" viewBox="0 0 11 13"><path d="M1.6,5.6 L5.2,2 L8.8,5.6 M1.6,11.6 L5.2,8 L8.8,11.6" fill="none" stroke="#0a0a0a" stroke-width="2.5"/></svg>
<div class="abs" style="left:1008px;top:1085.46px;width:638.00px;height:29.53px;background:#fff"></div>
<div class="t" style="left:1019.70px;top:1090.62px;font-size:18.71px;color:#757575;">Electrical Data</div>
<div class="t" style="left:1341.19px;top:1089.40px;font-size:20.15px;color:#757575;">Lighting circuit connector 0 V/...</div>
<div class="abs" style="left:1008px;top:1113.79px;width:638.00px;height:1.7px;background:repeating-linear-gradient(90deg,rgba(40,40,40,1) 0px,rgba(40,40,40,1) 0.7px,rgba(40,40,40,0) 1.64px,rgba(40,40,40,0) 2.34px,rgba(40,40,40,1) 3.28px)"></div>
<div class="abs" style="left:1337.30px;top:1085.46px;width:1.7px;height:29.53px;background:repeating-linear-gradient(180deg,rgba(40,40,40,1) 0px,rgba(40,40,40,1) 0.7px,rgba(40,40,40,0) 1.64px,rgba(40,40,40,0) 2.34px,rgba(40,40,40,1) 3.28px)"></div>
<div class="abs" style="left:1624.80px;top:1085.46px;width:1.7px;height:29.53px;background:repeating-linear-gradient(180deg,rgba(40,40,40,1) 0px,rgba(40,40,40,1) 0.7px,rgba(40,40,40,0) 1.64px,rgba(40,40,40,0) 2.34px,rgba(40,40,40,1) 3.28px)"></div>
<div class="abs" style="left:1644.30px;top:1085.46px;width:1.7px;height:29.53px;background:repeating-linear-gradient(180deg,rgba(40,40,40,1) 0px,rgba(40,40,40,1) 0.7px,rgba(40,40,40,0) 1.64px,rgba(40,40,40,0) 2.34px,rgba(40,40,40,1) 3.28px)"></div>
<div class="abs" style="left:1008px;top:1114.99px;width:637.70px;height:29.53px;background:#dcdcdc"></div>
<div class="t" style="left:1010.71px;top:1120.99px;font-size:19.85px;color:#1a1a1a;">Other</div>
<svg class="abs" style="left:1625px;top:1122.39px" width="11" height="13" viewBox="0 0 11 13"><path d="M1.6,1.6 L5.2,5.2 L8.8,1.6 M1.6,7.6 L5.2,11.2 L8.8,7.6" fill="none" stroke="#0a0a0a" stroke-width="2.5"/></svg>
<div class="abs" style="left:1007px;top:1144.52px;width:639px;height:352.08px;background:#fff"></div>
<div class="t" style="left:1010.05px;top:1507.75px;font-size:19.43px;color:#1d62c4;text-decoration:underline;text-underline-offset:2px;">Properties help</div>
<div class="abs" style="left:1524px;top:1503px;width:117px;height:32px;background:#f9f9f9;border:1px solid #e6e6e6;box-sizing:border-box;border-radius:5px"></div>
<div class="t" style="left:1556.90px;top:1508.84px;font-size:20.27px;color:#7a7a7a;">Apply</div>

<svg class="abs" width="1800" height="1800" style="left:0;top:0;pointer-events:none">
<defs>
<pattern id="wm" x="0" y="0" width="69.07" height="69.07" patternUnits="userSpaceOnUse">
 <text x="4.4" y="29.8" font-family="Liberation Sans" font-weight="bold" font-size="17.6" textLength="24.8" lengthAdjust="spacingAndGlyphs" fill="#000" fill-opacity="0.055">RD</text>
 <path d="M33.1,39.9 L70.1,76.9 M70.1,39.9 L33.1,76.9 M33.1,-29.17 L70.1,7.83 M70.1,-29.17 L33.1,7.83 M-35.97,39.9 L1.03,76.9 M1.03,39.9 L-35.97,76.9 M-35.97,-29.17 L1.03,7.83 M1.03,-29.17 L-35.97,7.83" stroke="#000" stroke-opacity="0.026" stroke-width="1"/>
</pattern>
</defs>
<rect width="1800" height="1800" fill="url(#wm)"/>
</svg>

</body></html>
